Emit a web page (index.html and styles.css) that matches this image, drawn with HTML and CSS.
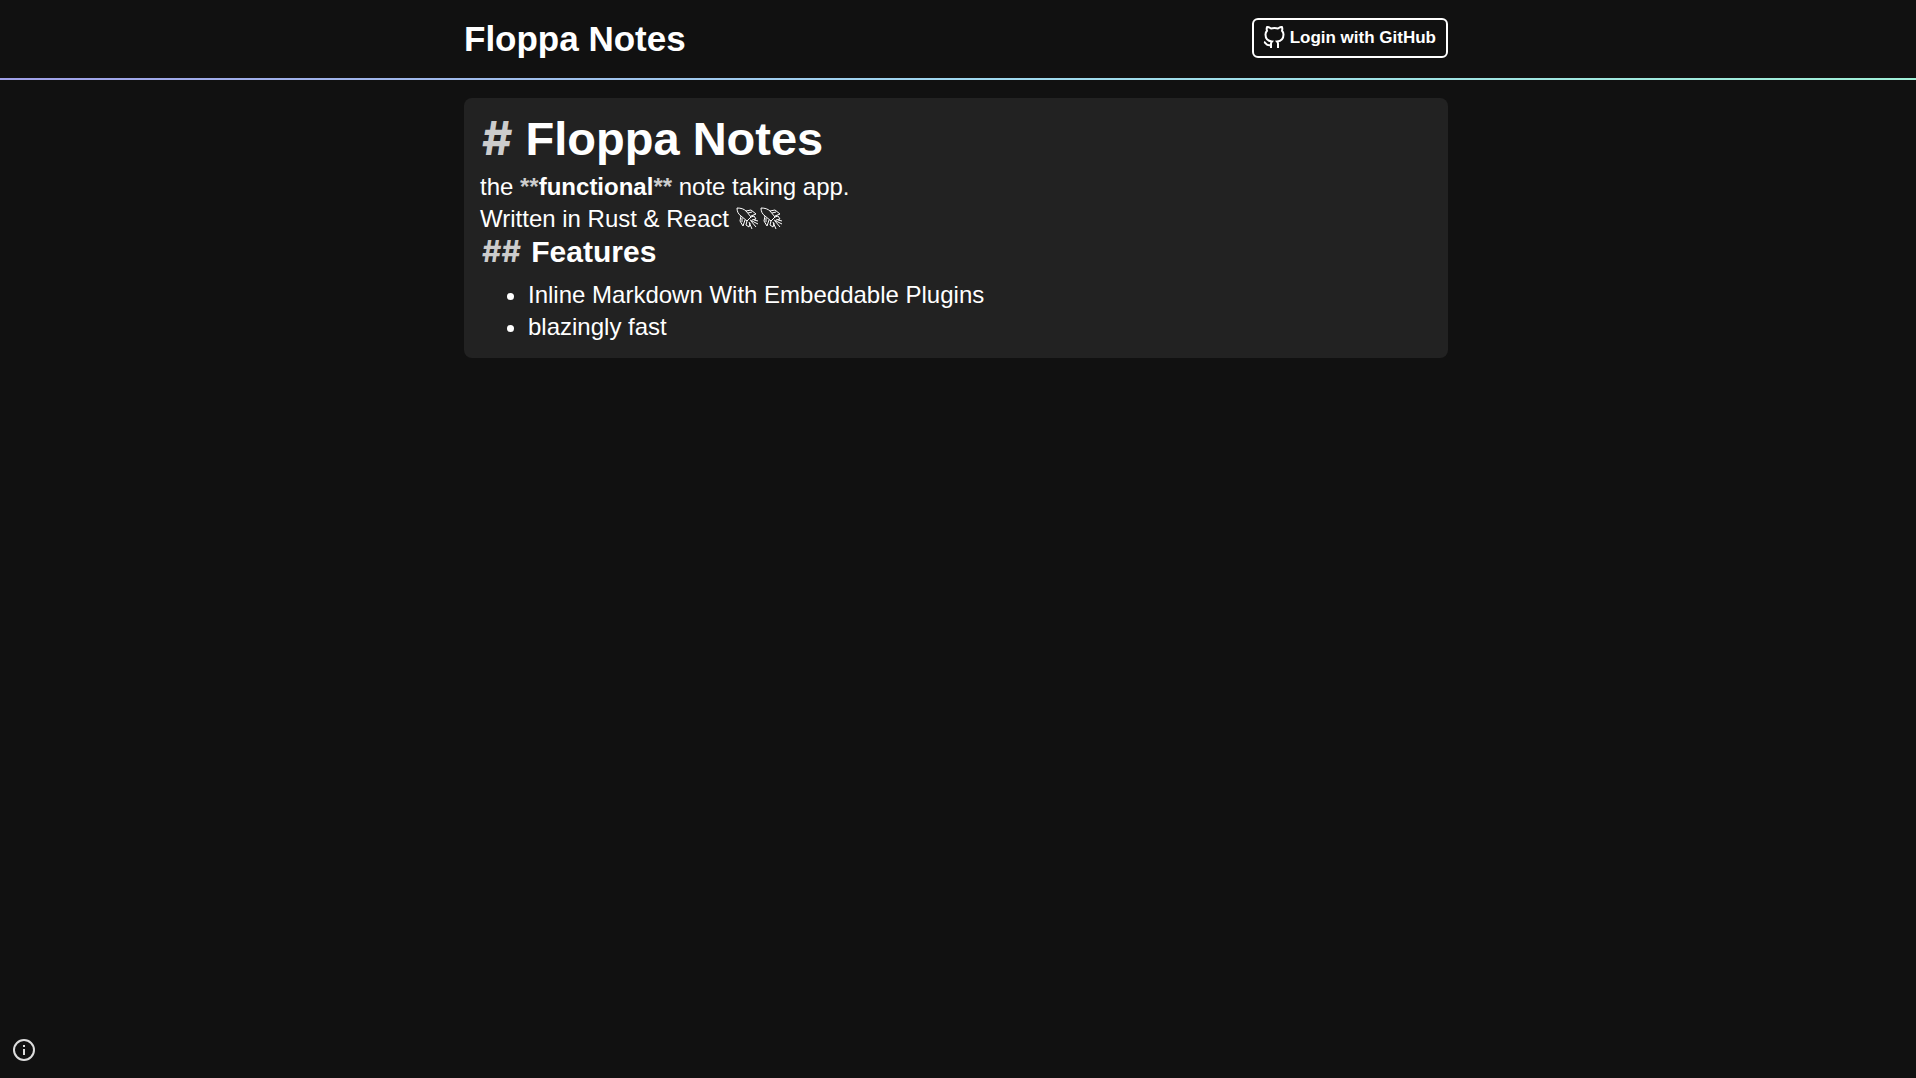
FILE: index.html
```html
<!DOCTYPE html>
<html lang="en">
<head>
<meta charset="utf-8">
<meta name="viewport" content="width=device-width, initial-scale=1">
<title>Floppa Notes</title>
<link rel="stylesheet" href="styles.css">
</head>
<body>
<svg class="sprite" aria-hidden="true">
  <symbol id="rocket" viewBox="0 0 24 24">
    <path d="M1 1c4 0 7 1 9 3l5 6-4 4-6-5C2 7 1 4 1 1ZM10 4l5-1 5 4-5 2M12 6l4-1M5 9l-1 5 3 5 2-6M6 11v4M15 10l3-1 2 3-4 1M11 14l-1 4 3 2 1-4M14 13l8 4M15 14l5 6M13 15l3 7M18 13l4 1"/>
  </symbol>
</svg>
<header class="header">
  <div class="container header-row">
    <div class="brand">Floppa Notes</div>
    <button class="login" type="button">
      <svg class="icon" viewBox="0 0 24 24" aria-hidden="true"><path d="M9 19c-5 1.500-5-2.500-7-3m14 6v-3.870a3.370 3.370 0 0 0-.94-2.610c3.140-.35 6.440-1.540 6.440-7A5.440 5.440 0 0 0 20 4.770 5.070 5.070 0 0 0 19.910 1S18.730.65 16 2.480a13.380 13.380 0 0 0-7 0C6.270.65 5.090 1 5.090 1A5.070 5.070 0 0 0 5 4.770a5.440 5.440 0 0 0-1.500 3.780c0 5.420 3.300 6.610 6.440 7A3.370 3.370 0 0 0 9 18.130V22"/></svg>
      <span>Login with GitHub</span>
    </button>
  </div>
</header>
<main class="container">
  <article class="note">
    <h1><span class="mark">#</span> Floppa Notes</h1>
    <p>the <strong><span class="mark">**</span>functional<span class="mark">**</span></strong> note taking app.</p>
    <p>Written in Rust &amp; React <svg class="rocket" role="img" aria-label="rocket"><use href="#rocket"/></svg><svg class="rocket" role="img" aria-label="rocket"><use href="#rocket"/></svg></p>
    <h2><span class="mark">##</span> Features</h2>
    <ul>
      <li>Inline Markdown With Embeddable Plugins</li>
      <li>blazingly fast</li>
    </ul>
  </article>
</main>
<button class="info" type="button" aria-label="Information">
  <svg class="icon" viewBox="0 0 24 24" aria-hidden="true"><circle cx="12" cy="12" r="10"/><path d="M12 11v6M12 7v2"/></svg>
</button>
</body>
</html>
```

FILE: styles.css
```css
* { box-sizing: border-box; margin: 0; padding: 0; }
body {
  background: #111;
  color: #fff;
  font: 24px/32px "Liberation Sans", Arial, sans-serif;
}
.sprite { position: absolute; width: 0; height: 0; }
.container {
  width: 100%;
  max-width: 1004px;
  margin: 0 auto;
  padding: 0 12px 0 8px;
}
.header {
  border-bottom: 2px solid;
  border-image: linear-gradient(to right, #a0a0e8, #a0d8f0, #a0f0d8) 1;
}
.header-row {
  display: flex;
  align-items: center;
  justify-content: space-between;
  padding-top: 17px;
  padding-bottom: 19px;
}
.brand { padding-top: 2px; font-size: 35px; line-height: 40px; font-weight: 700; }
.icon {
  width: 24px;
  height: 24px;
  fill: none;
  stroke: currentColor;
  stroke-width: 2;
}
.login {
  display: flex;
  align-items: center;
  gap: 4px;
  height: 40px;
  padding: 0 10px 0 8px;
  border: 2px solid #fff;
  border-radius: 6px;
  background: transparent;
  color: inherit;
  font: 700 17px/24px "Liberation Sans", Arial, sans-serif;
}
.note {
  margin-top: 18px;
  padding: 16px 16px 15px;
  border-radius: 8px;
  background: #222;
}
.mark { color: #ccc; }
h1 .mark, h2 .mark {
  padding-left: 2px;
  font-family: Inter, sans-serif;
  line-height: 0;
}
h2 .mark { padding-right: 2px; }
h1 { font-size: 47px; line-height: 50px; padding-bottom: 7px; }
h2 { font-size: 30px; line-height: 34px; padding-bottom: 10px; }
ul { padding-left: 48px; }
.rocket {
  width: 24px;
  height: 24px;
  vertical-align: -4px;
  fill: none;
  stroke: currentColor;
}
.info {
  position: fixed;
  left: 12px;
  bottom: 16px;
  display: flex;
  border: 0;
  background: transparent;
  color: #ddd;
}
```
